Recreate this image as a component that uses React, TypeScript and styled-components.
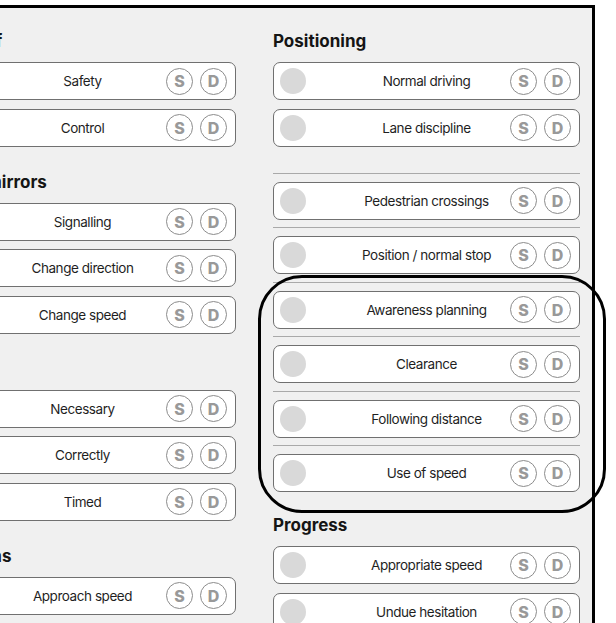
import React from 'react';
import styled, {createGlobalStyle} from "styled-components";

const GlobalStyle = createGlobalStyle`
  html, body {
    margin: 0;
    padding: 0;
    background: #ffffff;
    overflow: hidden;
  }
  body {
    font-family: Inter, "Liberation Sans", sans-serif;
    color: #1d1d1d;
  }
`

const StyledPage = styled.div`
  position: relative;
  width: 616px;
  height: 623px;
  overflow: hidden;
`

const StyledFrame = styled.div`
  margin: 5px 0 0 -83px;
  width: 678px;
  min-height: 640px;
  padding: 23px 12px 0 12px;
  box-sizing: border-box;
  background: #f0f0f0;
  border-top: 3px solid #000;
  border-right: 3px solid #000;
  display: grid;
  grid-template-columns: 307px 307px;
  column-gap: 37px;
  align-items: start;
`

const StyledColumn = styled.div<{ $gap: number }>`
  display: flex;
  flex-direction: column;
  gap: ${props => props.$gap}px;
`

const StyledSection = styled.section`
  display: flex;
  flex-direction: column;
  gap: 8.5px;
`

const StyledHeading = styled.h2`
  margin: 0 0 2.5px 0;
  font-size: 17px;
  line-height: 20px;
  font-weight: 700;
  color: #151515;
  white-space: nowrap;
`

const StyledDividedList = styled.div`
  display: flex;
  flex-direction: column;
  margin-top: 2px;
  margin-bottom: -1px;
`

const StyledDividedItem = styled.div`
  border-top: 1px solid #a9a9a9;
  padding: 8px 0 7.5px 0;
  &:last-child {
    padding-bottom: 0;
  }
`

const StyledCard = styled.div`
  position: relative;
  height: 38px;
  box-sizing: border-box;
  background: #ffffff;
  border: 1.5px solid #707070;
  border-radius: 7px;
  display: flex;
  align-items: center;
  padding: 0 8px 0 6px;
`

const StyledDot = styled.span`
  width: 26px;
  height: 26px;
  border-radius: 50%;
  background: #d9d9d9;
  flex-shrink: 0;
`

const StyledLabel = styled.span`
  position: absolute;
  left: 0;
  right: 0;
  text-align: center;
  font-size: 13.5px;
  letter-spacing: -0.45px;
  color: #1f1f1f;
  pointer-events: none;
`

const StyledMarks = styled.div`
  margin-left: auto;
  display: flex;
  gap: 7px;
`

const StyledMark = styled.span`
  width: 27px;
  height: 27px;
  box-sizing: border-box;
  border-radius: 50%;
  border: 1px solid #8c8c8c;
  display: flex;
  align-items: center;
  justify-content: center;
  font-size: 16px;
  font-weight: 800;
  color: #999999;
`

const StyledHighlight = styled.div`
  position: absolute;
  left: 258px;
  top: 275px;
  width: 348px;
  height: 238px;
  box-sizing: border-box;
  border: 3.5px solid #000;
  border-radius: 44px;
  pointer-events: none;
`

interface ISection {
    title: string
    items: string[]
}

const leftSections: ISection[] = [
    {title: "Move off", items: ["Safety", "Control"]},
    {title: "Use of mirrors", items: ["Signalling", "Change direction", "Change speed"]},
    {title: "Signals", items: ["Necessary", "Correctly", "Timed"]},
    {title: "Junctions", items: ["Approach speed", "Observation"]},
]

const dividedItems = [
    "Pedestrian crossings",
    "Position / normal stop",
    "Awareness planning",
    "Clearance",
    "Following distance",
    "Use of speed",
]

const FaultCard: React.FC<{ label: string }> = ({label}) => {
    return (
        <StyledCard>
            <StyledDot/>
            <StyledLabel>{label}</StyledLabel>
            <StyledMarks>
                <StyledMark>{"S"}</StyledMark>
                <StyledMark>{"D"}</StyledMark>
            </StyledMarks>
        </StyledCard>
    )
}

const Section: React.FC<ISection> = ({title, items}) => {
    return (
        <StyledSection>
            <StyledHeading>{title}</StyledHeading>
            {items.map((item) => <FaultCard key={item} label={item}/>)}
        </StyledSection>
    )
}

const App: React.FC = () => {
    return (
        <StyledPage>
            <GlobalStyle/>
            <StyledFrame>
                <StyledColumn $gap={25}>
                    {leftSections.map((section) => <Section key={section.title} {...section}/>)}
                </StyledColumn>
                <StyledColumn $gap={24}>
                    <Section title={"Positioning"} items={["Normal driving", "Lane discipline"]}/>
                    <StyledDividedList>
                        {dividedItems.map((item) => (
                            <StyledDividedItem key={item}>
                                <FaultCard label={item}/>
                            </StyledDividedItem>
                        ))}
                    </StyledDividedList>
                    <Section title={"Progress"} items={["Appropriate speed", "Undue hesitation"]}/>
                </StyledColumn>
            </StyledFrame>
            <StyledHighlight/>
        </StyledPage>
    );
};

export default App;
